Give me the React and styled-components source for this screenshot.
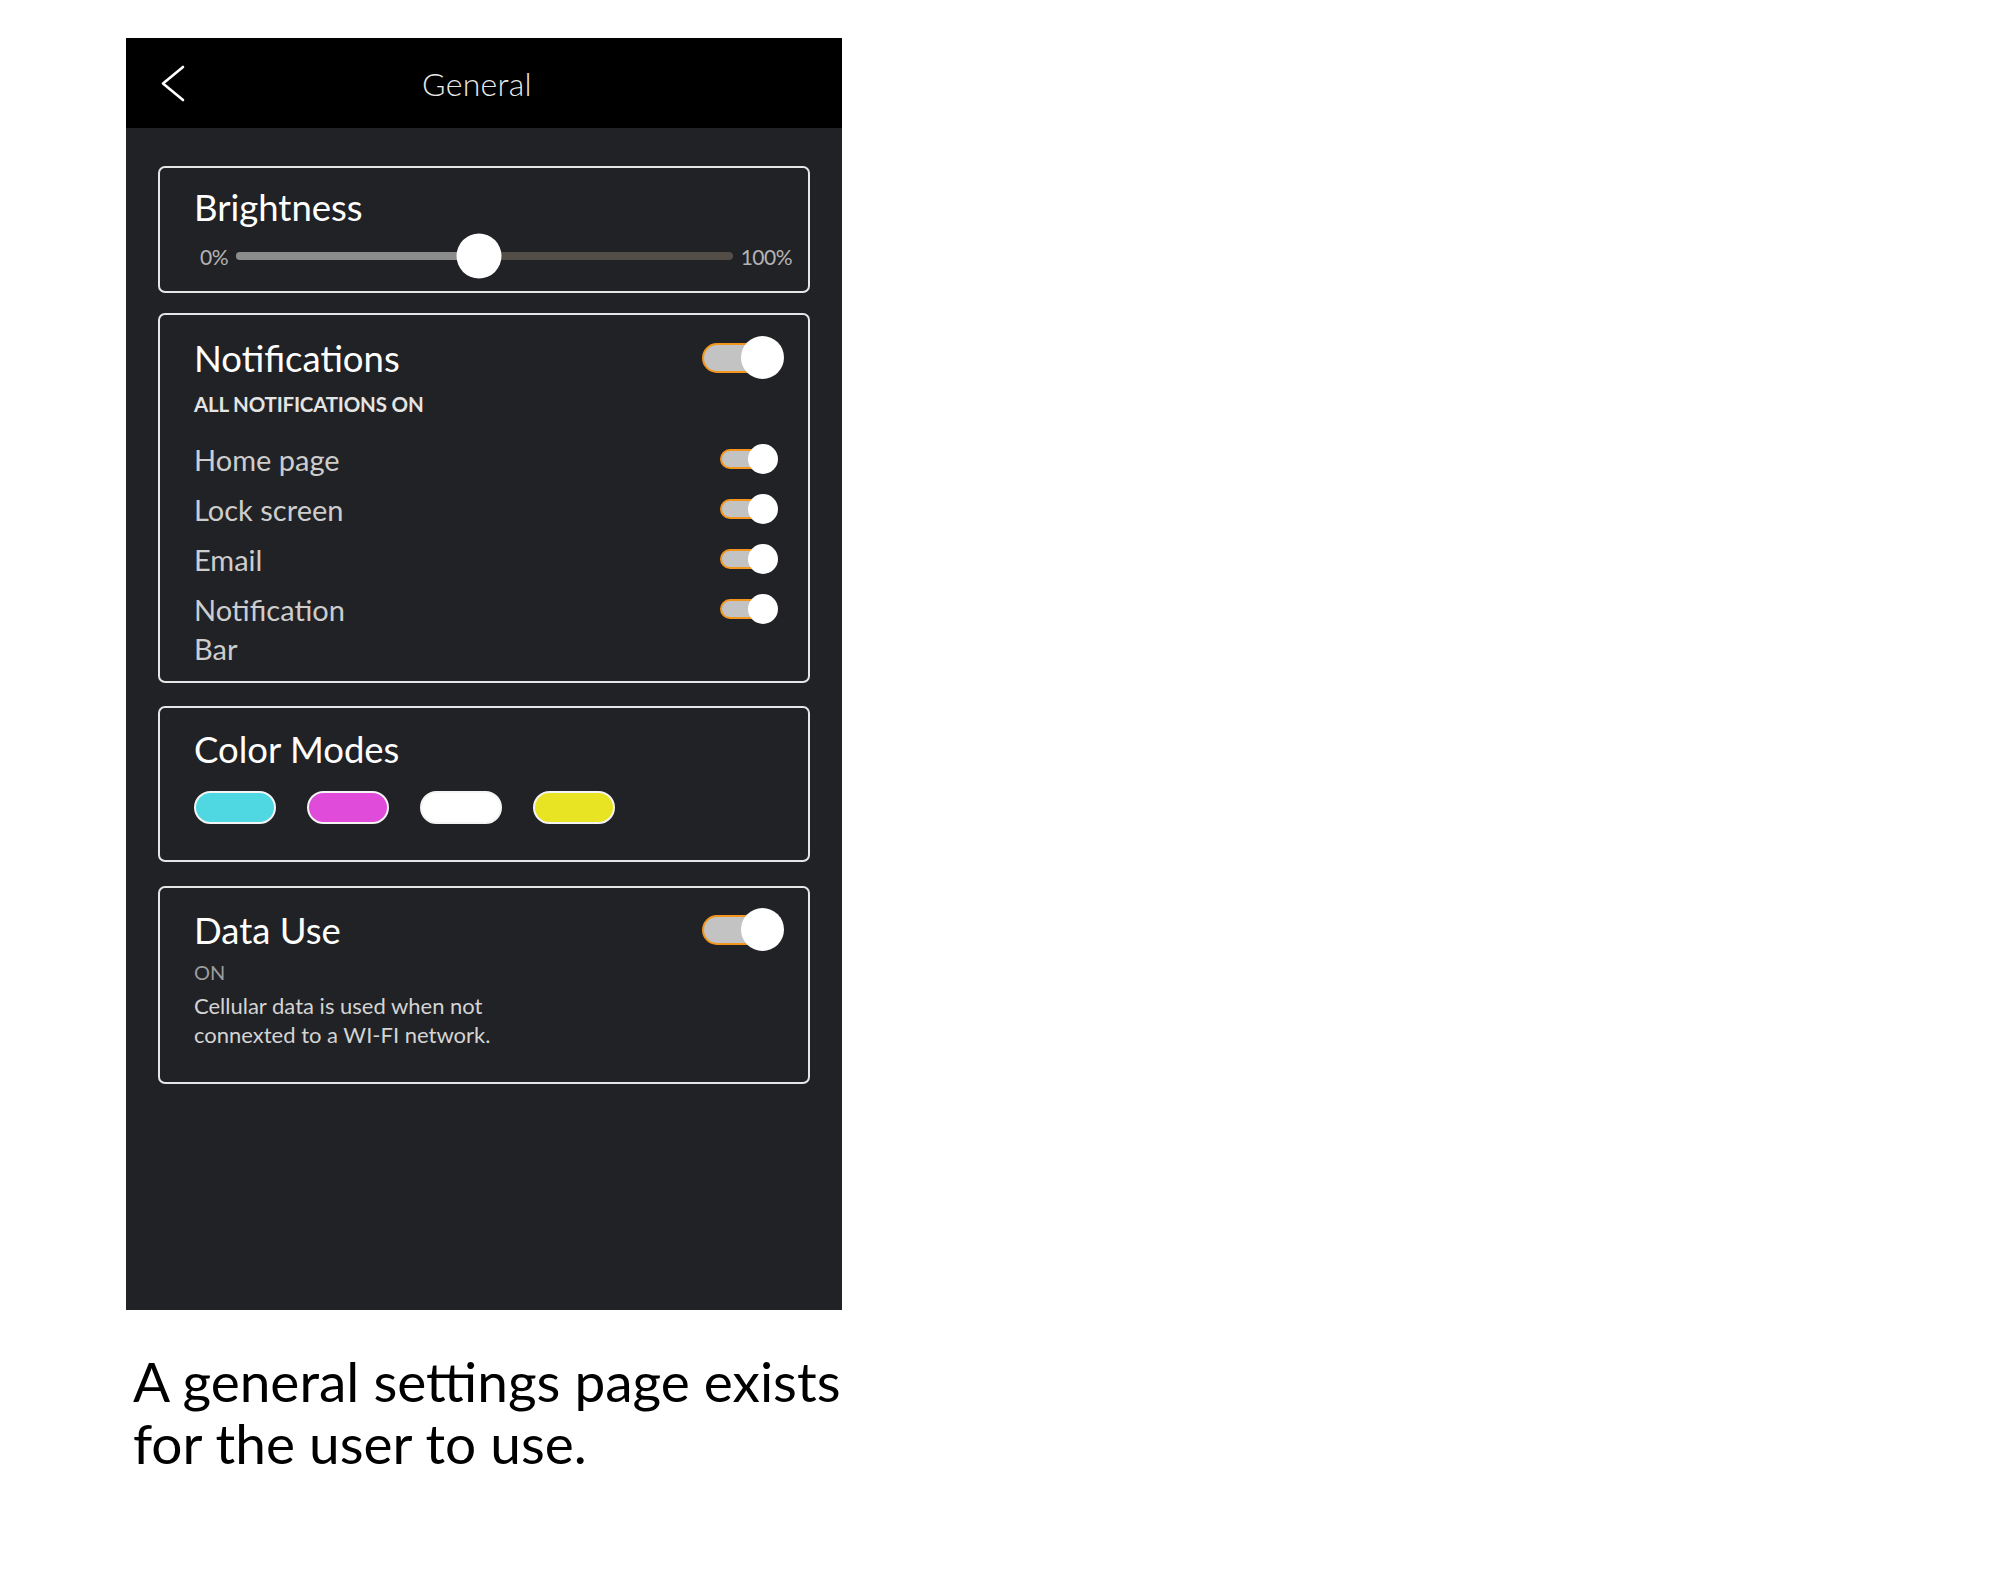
import React, { useState } from "react"
import styled, { createGlobalStyle } from "styled-components"

const GlobalStyle = createGlobalStyle`
  body {
    margin: 0;
    background: #ffffff;
    font-family: Lato, "Open Sans", sans-serif;
  }
`

const colorModes = ["#4fd7e2", "#e04bd9", "#ffffff", "#e9e423"]

function Toggle({ big, on }) {
  return (
    <Switch $big={big} $on={on}>
      <Track $big={big} />
      <Thumb $big={big} />
    </Switch>
  )
}

function App() {
  const [brightness] = useState(49)
  const [rows] = useState(["Home page", "Lock screen", "Email", "Notification Bar"])

  return (
    <>
      <GlobalStyle />
      <Page>
        <Phone>
          <Header>
            <BackButton>
              <svg width="27" height="37" viewBox="0 0 27 37">
                <polyline
                  points="24,2 4,18.5 24,35"
                  fill="none"
                  stroke="#fff"
                  strokeWidth="2.6"
                  strokeLinecap="round"
                  strokeLinejoin="round"
                />
              </svg>
            </BackButton>
            <HeaderTitle>General</HeaderTitle>
            <span />
          </Header>

          <Content>
            <Card $pad="19px 16px 11px 34px">
              <CardTitle>Brightness</CardTitle>
              <SliderRow>
                <SliderLabel>0%</SliderLabel>
                <SliderTrack>
                  <SliderFill style={{ width: brightness + "%" }} />
                  <SliderKnob style={{ left: brightness + "%" }} />
                </SliderTrack>
                <SliderLabel>100%</SliderLabel>
              </SliderRow>
            </Card>

            <Card $top={20} $pad="21px 24px 13px 34px">
              <HeadRow>
                <CardTitle>Notifications</CardTitle>
                <Toggle big on />
              </HeadRow>
              <Caps>ALL NOTIFICATIONS ON</Caps>
              <List>
                {rows.map((row) => (
                  <ListRow key={row}>
                    <RowLabel>{row}</RowLabel>
                    <SmallToggleWrap>
                      <Toggle on />
                    </SmallToggleWrap>
                  </ListRow>
                ))}
              </List>
            </Card>

            <Card $top={23} $pad="21px 24px 36px 34px">
              <CardTitle>Color Modes</CardTitle>
              <Swatches>
                {colorModes.map((color) => (
                  <Swatch key={color} $color={color} />
                ))}
              </Swatches>
            </Card>

            <Card $top={24} $pad="20px 24px 33px 34px">
              <HeadRow>
                <CardTitle>Data Use</CardTitle>
                <Toggle big on />
              </HeadRow>
              <StatusText>ON</StatusText>
              <Description>
                Cellular data is used when not connexted to a WI-FI network.
              </Description>
            </Card>
          </Content>
        </Phone>
        <Caption>A general settings page exists for the user to use.</Caption>
      </Page>
    </>
  )
}

export default App

const Page = styled.div`
  padding: 38px 0 80px 126px;
`

const Phone = styled.div`
  width: 716px;
  height: 1272px;
  background: #212226;
  display: flex;
  flex-direction: column;
  font-family: Lato, "Open Sans", sans-serif;
`

const Header = styled.div`
  height: 90px;
  background: #000;
  display: grid;
  grid-template-columns: 27px 1fr 41px;
  align-items: center;
  padding: 0 33px;
`

const BackButton = styled.div`
  display: flex;
  align-items: center;
  height: 37px;
`

const HeaderTitle = styled.div`
  text-align: center;
  color: #e8e8e8;
  font-size: 32px;
  font-weight: 300;
  letter-spacing: 0.3px;
`

const Content = styled.div`
  padding: 38px 32px;
  display: flex;
  flex-direction: column;
`

const Card = styled.div`
  margin-top: ${(p) => p.$top || 0}px;
  border: 2px solid #e6e6e6;
  border-radius: 7px;
  padding: ${(p) => p.$pad};
`

const CardTitle = styled.div`
  color: #ffffff;
  font-size: 36.5px;
  line-height: 40px;
`

const SliderRow = styled.div`
  display: flex;
  align-items: center;
  gap: 8px;
  height: 48px;
  margin-top: 5px;
  margin-left: 6px;
`

const SliderLabel = styled.span`
  color: #b4b4b4;
  font-size: 21px;
  letter-spacing: -0.5px;
`

const SliderTrack = styled.div`
  flex: 1;
  height: 8px;
  border-radius: 4px;
  background: #534d47;
  position: relative;
`

const SliderFill = styled.div`
  height: 100%;
  border-radius: 4px;
  background: #8c8c8c;
`

const SliderKnob = styled.div`
  position: absolute;
  top: 50%;
  width: 45px;
  height: 45px;
  border-radius: 50%;
  background: #fff;
  transform: translate(-50%, -50%);
`

const HeadRow = styled.div`
  display: flex;
  justify-content: space-between;
  align-items: center;
`

const Caps = styled.div`
  color: #e4e4e4;
  font-size: 20.5px;
  font-weight: 700;
  line-height: 24px;
  margin-top: 13px;
  letter-spacing: -0.2px;
`

const List = styled.div`
  display: flex;
  flex-direction: column;
  gap: 11px;
  margin-top: 24px;
`

const ListRow = styled.div`
  display: flex;
  justify-content: space-between;
  align-items: flex-start;
`

const RowLabel = styled.div`
  color: #cdcdcd;
  font-size: 29px;
  line-height: 39px;
  max-width: 180px;
`

const SmallToggleWrap = styled.div`
  margin-top: 4px;
  margin-right: 6px;
`

const Switch = styled.div`
  position: relative;
  display: flex;
  align-items: center;
  width: ${(p) => (p.$big ? 82 : 58)}px;
  height: ${(p) => (p.$big ? 43 : 30)}px;
`

const Track = styled.div`
  box-sizing: border-box;
  width: ${(p) => (p.$big ? 68 : 48)}px;
  height: ${(p) => (p.$big ? 30 : 20)}px;
  border-radius: ${(p) => (p.$big ? 15 : 10)}px;
  background: #c3c3c3;
  border: 2px solid #f5961c;
`

const Thumb = styled.div`
  position: absolute;
  right: 0;
  top: 0;
  width: ${(p) => (p.$big ? 43 : 30)}px;
  height: ${(p) => (p.$big ? 43 : 30)}px;
  border-radius: 50%;
  background: #fff;
`

const Swatches = styled.div`
  display: flex;
  gap: 31px;
  margin-top: 22px;
`

const Swatch = styled.div`
  box-sizing: border-box;
  width: 82px;
  height: 33px;
  border-radius: 17px;
  background: ${(p) => p.$color};
  border: 2px solid #f4f4f4;
`

const StatusText = styled.div`
  color: #9c9c9c;
  font-size: 20px;
  line-height: 24px;
  margin-top: 9px;
`

const Description = styled.div`
  color: #d4d4d4;
  font-size: 22px;
  line-height: 29px;
  margin-top: 7px;
  max-width: 340px;
`

const Caption = styled.div`
  width: 720px;
  margin-top: 40px;
  padding-left: 7px;
  color: #000;
  font-size: 55px;
  line-height: 62px;
  font-family: Lato, "Noto Sans", sans-serif;
`
